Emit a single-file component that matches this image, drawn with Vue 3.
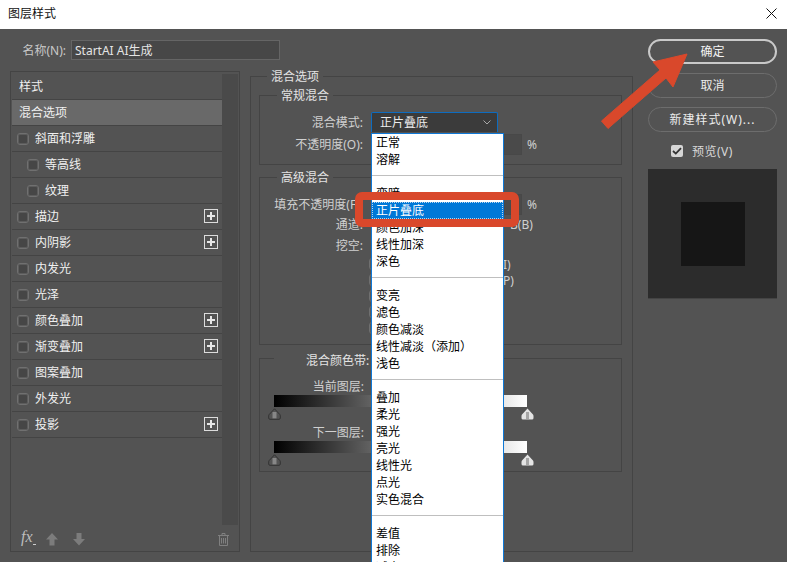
<template>
  <div class="dialog">
    <div class="titlebar">
      <span>图层样式</span>
      <svg class="close" width="11" height="11" viewBox="0 0 11 11">
        <path d="M0.5 0.5L10.5 10.5M10.5 0.5L0.5 10.5" stroke="#111" stroke-width="1" fill="none" />
      </svg>
    </div>

    <div class="content">
      <!-- левая колонка -->
      <div class="left">
        <div class="name-row">
          <span class="name-label">名称(N):</span>
          <div class="name-input">StartAI AI生成</div>
        </div>
        <div class="panel">
          <div class="list">
            <div
              v-for="row in styles"
              :key="row.text"
              class="style-row"
              :class="{ active: row.active, sub: row.sub, plain: row.plain }"
            >
              <span v-if="!row.plain" class="check"></span>
              <span class="style-text">{{ row.text }}</span>
              <span v-if="row.plus" class="plus"></span>
            </div>
            <div class="tools">
              <span class="fx">fx</span>
              <svg class="tool-up" width="12" height="13" viewBox="0 0 12 13">
                <path d="M6 0L12 6.500H8.500V12.500H3.500V6.500H0Z" fill="#7c7c7c" />
              </svg>
              <svg class="tool-down" width="12" height="13" viewBox="0 0 12 13">
                <path d="M6 12.500L12 6H8.500V0H3.500V6H0Z" fill="#7c7c7c" />
              </svg>
              <svg class="tool-trash" width="11" height="13" viewBox="0 0 11 13">
                <path d="M0 2.500H11M4 2.500V0.500H7V2.500M1.500 2.500V12.500H9.500V2.500M3.500 5V10.500M5.500 5V10.500M7.500 5V10.500" stroke="#808080" fill="none" />
              </svg>
            </div>
          </div>
          <div class="scroll"></div>
        </div>
      </div>

      <!-- средняя колонка -->
      <fieldset class="main-set">
        <legend>混合选项</legend>

        <fieldset class="group general">
          <legend>常规混合</legend>
          <div class="form-row select-row">
            <span class="label">混合模式:</span>
            <div class="select">
              <span>正片叠底</span>
              <svg width="8" height="5" viewBox="0 0 8 5">
                <path d="M0.500 0.500L4 4L7.500 0.500" stroke="#a8a8a8" fill="none" />
              </svg>
              <div class="popup">
                <template v-for="(item, i) in modes" :key="i">
                  <div v-if="item === '-'" class="sep"></div>
                  <div v-else class="mode" :class="{ current: item === '正片叠底' }">{{ item }}</div>
                </template>
              </div>
            </div>
          </div>
          <div class="form-row input-row">
            <span class="label">不透明度(O):</span>
            <div class="num"></div>
            <span class="pct">%</span>
          </div>
        </fieldset>

        <fieldset class="group advanced">
          <legend>高级混合</legend>
          <div class="form-row input-row fill-row">
            <span class="label">填充不透明度(F):</span>
            <div class="num"></div>
            <span class="pct">%</span>
          </div>
          <div class="form-row channel-row">
            <span class="label">通道:</span>
            <span class="channel-b">B(B)</span>
          </div>
          <div class="form-row knock-row">
            <span class="label">挖空:</span>
          </div>
          <div class="checks">
            <div v-for="(c, i) in advChecks" :key="i" class="adv-check">
              <span class="check"></span>
              <span v-if="c" class="adv-tail">{{ c }}</span>
            </div>
          </div>
        </fieldset>

        <fieldset class="group bands">
          <legend>混合颜色带:</legend>
          <div v-for="b in bandLabels" :key="b" class="band">
            <div class="band-label">{{ b }}</div>
            <div class="gradient"></div>
            <div class="sliders">
              <svg width="13" height="12" viewBox="0 0 13 12">
                <path d="M4.500 4H8.500V10.500H4.500Z" fill="#878787" />
                <path d="M6.500 0.800L1.200 6.500Q0.700 7 0.700 8V10Q0.700 11.300 2 11.300H11Q12.300 11.300 12.300 10V8Q12.300 7 11.800 6.500Z" fill="none" stroke="#333" />
              </svg>
              <svg width="13" height="12" viewBox="0 0 13 12">
                <path d="M6.500 0.500L1 6.500Q0.500 7 0.500 8V10Q0.500 11.500 2 11.500H11Q12.500 11.500 12.500 10V8Q12.500 7 12 6.500Z" fill="#e4e4e4" />
                <path d="M5 4H8V11H5Z" fill="#a6a6a6" />
              </svg>
            </div>
          </div>
        </fieldset>
      </fieldset>

      <!-- правая колонка -->
      <div class="right">
        <button class="btn primary">确定</button>
        <button class="btn">取消</button>
        <button class="btn wide">新建样式(W)...</button>
        <div class="preview-row">
          <span class="preview-check">
            <svg width="10" height="8" viewBox="0 0 10 8">
              <path d="M1 4L3.800 6.600L9 1.200" stroke="#333" stroke-width="1.800" fill="none" />
            </svg>
          </span>
          <span class="preview-text">预览(V)</span>
        </div>
        <div class="preview">
          <div class="preview-inner"></div>
        </div>
      </div>
    </div>

    <!-- красные пометки поверх скриншота -->
    <svg class="marks" width="787" height="562" viewBox="0 0 787 562">
      <rect x="359" y="196" width="156" height="27" rx="3" fill="none" stroke="#d9482b" stroke-width="8" />
      <path d="M608 128.500L601.500 121L660 70L653 62L687 54L673 87L666 78Z" fill="#d9482b" stroke="#d9482b" stroke-linejoin="round" />
    </svg>
  </div>
</template>

<script setup>
const styles = [
  { text: '样式', plain: true },
  { text: '混合选项', plain: true, active: true },
  { text: '斜面和浮雕' },
  { text: '等高线', sub: true },
  { text: '纹理', sub: true },
  { text: '描边', plus: true },
  { text: '内阴影', plus: true },
  { text: '内发光' },
  { text: '光泽' },
  { text: '颜色叠加', plus: true },
  { text: '渐变叠加', plus: true },
  { text: '图案叠加' },
  { text: '外发光' },
  { text: '投影', plus: true }
]

const modes = [
  '正常', '溶解', '-',
  '变暗', '正片叠底', '颜色加深', '线性加深', '深色', '-',
  '变亮', '滤色', '颜色减淡', '线性减淡（添加）', '浅色', '-',
  '叠加', '柔光', '强光', '亮光', '线性光', '点光', '实色混合', '-',
  '差值', '排除', '减去'
]

// подписи закрыты выпадающим списком, видны только хвосты
const advChecks = ['I)', 'P)', '', '', '']

const bandLabels = ['当前图层:', '下一图层:']
</script>

<style>
html,
body {
  margin: 0;
  background: #535353;
}
</style>

<style scoped>
.dialog {
  position: relative;
  width: 787px;
  height: 562px;
  overflow: hidden;
  background: #535353;
  color: #dcdcdc;
  font-family: "Noto Sans", "Noto Sans CJK SC", sans-serif;
  font-size: 12px;
  line-height: 16px;
}

.titlebar {
  height: 29px;
  background: #fff;
  color: #111;
  display: flex;
  align-items: center;
  justify-content: space-between;
  padding: 0 10px 2px 8px;
  box-sizing: border-box;
}

.content {
  display: flex;
  align-items: flex-start;
}

/* левая колонка */
.left {
  width: 230px;
  margin-left: 10px;
  flex-shrink: 0;
}

.name-row {
  display: flex;
  align-items: center;
  margin-top: 11px;
  height: 20px;
}

.name-label {
  width: 56px;
  flex-shrink: 0;
  margin-right: 5px;
  padding-top: 1px;
  text-align: right;
  white-space: nowrap;
  color: #c8c8c8;
}

.name-input {
  width: 209px;
  height: 20px;
  box-sizing: border-box;
  flex-shrink: 0;
  padding: 1px 0 0 3px;
  line-height: 18px;
  background: #474747;
  border: 1px solid #656565;
  color: #e4e4e4;
}

.panel {
  margin-top: 11px;
  height: 481px;
  box-sizing: border-box;
  border: 1px solid #444;
  padding-top: 2px;
  padding-left: 1px;
  display: flex;
}

.list {
  width: 210px;
  display: flex;
  flex-direction: column;
}

.style-row {
  position: relative;
  height: 26px;
  box-sizing: border-box;
  border-bottom: 1px solid #444;
  display: flex;
  align-items: center;
  padding-left: 5px;
  color: #f0f0f0;
}

.style-row:last-of-type {
  border-bottom-color: #4c4c4c;
}

.style-row.plain {
  padding-left: 7px;
}

.style-row.sub {
  padding-left: 15px;
}

.style-row.active {
  background: #696969;
}

.check {
  width: 12px;
  height: 12px;
  box-sizing: border-box;
  flex-shrink: 0;
  border: 1px solid #707070;
  border-radius: 3px;
  background: #464646;
  box-shadow: inset 0 0 0 1px #5c5c5c;
}

.style-text {
  margin-left: 6px;
}

.plain .style-text {
  margin-left: 0;
}

.plus {
  position: absolute;
  right: 4px;
  top: 5px;
  width: 14px;
  height: 14px;
  box-sizing: border-box;
  border: 1px solid #dcdcdc;
  background:
    linear-gradient(#e6e6e6, #e6e6e6) center / 8px 2px no-repeat,
    linear-gradient(#e6e6e6, #e6e6e6) center / 2px 8px no-repeat;
}

.tools {
  position: relative;
  height: 113px;
}

.fx {
  position: absolute;
  left: 9px;
  top: 91px;
  font-family: "Liberation Serif", serif;
  font-style: italic;
  font-size: 16px;
  color: #bdbdbd;
}

.fx::after {
  content: "";
  position: absolute;
  left: 12px;
  top: 15px;
  width: 3px;
  height: 1px;
  background: #ccc;
}

.tool-up,
.tool-down,
.tool-trash {
  position: absolute;
  top: 95px;
}

.tool-up {
  left: 34px;
}

.tool-down {
  left: 61px;
}

.tool-trash {
  left: 206px;
}

.scroll {
  width: 16px;
  height: 451px;
  background: #4a4a4a;
}

/* средняя колонка */
fieldset {
  margin: 0;
  padding: 0;
  min-width: 0;
  box-sizing: border-box;
  border: 1px solid #444;
}

legend {
  height: 16px;
  box-sizing: border-box;
  padding: 0 4px;
  line-height: 18px;
  color: #e4e4e4;
}

.main-set {
  width: 383px;
  height: 484px;
  margin: 39px 0 0 10px;
  flex-shrink: 0;
  padding: 0 10px 0 8px;
}

.main-set > legend {
  margin-left: 8px;
}

.group legend {
  margin-left: 17px;
}

.general {
  height: 78px;
  margin-top: 3px;
}

.advanced {
  height: 176px;
  margin-top: 4px;
}

.bands {
  height: 124px;
  margin-top: 3px;
  padding: 0 14px;
}

.bands legend {
  height: 20px;
  margin-left: 0;
  padding: 6px 4px 0 32px;
  line-height: 14px;
}

.form-row {
  display: flex;
  align-items: center;
}

.label {
  width: 103px;
  flex-shrink: 0;
  padding-top: 1px;
  text-align: right;
  white-space: nowrap;
  color: #d0d0d0;
}

.select-row {
  margin-top: 9px;
  height: 20px;
}

.select {
  position: relative;
  width: 127px;
  height: 20px;
  box-sizing: border-box;
  margin-left: 8px;
  background: #3b3b3b;
  border: 1px solid #0d6cc0;
  border-bottom: none;
  border-radius: 2px 2px 0 0;
  display: flex;
  align-items: center;
  justify-content: space-between;
  padding: 0 6px 0 8px;
  color: #ececec;
}

.popup {
  position: absolute;
  left: -1px;
  top: 20px;
  width: 133px;
  box-sizing: border-box;
  background: #fff;
  border: 1px solid #0f78d6;
  border-bottom: none;
  color: #000;
  z-index: 3;
}

.mode {
  height: 17px;
  line-height: 17px;
  padding-left: 4px;
  white-space: nowrap;
}

.mode.current {
  background: #0078d7;
  color: #fff;
  outline: 1px dotted #b9d6ee;
  outline-offset: -1px;
}

.sep {
  height: 17px;
  box-sizing: border-box;
  padding-top: 7px;
}

.sep::before {
  content: "";
  display: block;
  height: 1px;
  background: #bfbfbf;
}

.input-row {
  height: 21px;
  margin-top: 2px;
}

.fill-row {
  margin-top: 9px;
}

.num {
  width: 18px;
  height: 21px;
  box-sizing: border-box;
  margin-left: 141px;
  border: 1px solid #484848;
  background: #4a4a4a;
}

.pct {
  margin-left: 5px;
  padding-top: 1px;
  color: #d0d0d0;
}

.channel-row {
  height: 16px;
  margin-top: 1px;
}

.channel-b {
  margin-left: 147px;
  padding-top: 1px;
  color: #d0d0d0;
}

.knock-row {
  height: 16px;
  margin-top: 5px;
}

.checks {
  margin-top: 3px;
  padding-left: 109px;
}

.adv-check {
  height: 16px;
  display: flex;
  align-items: center;
  white-space: nowrap;
  color: #d0d0d0;
}

.adv-tail {
  margin-left: 122px;
  padding-top: 1px;
}

.band {
  margin-top: 11px;
}

.band + .band {
  margin-top: 5px;
}

.band-label {
  width: 90px;
  height: 14px;
  line-height: 15px;
  text-align: right;
  color: #d0d0d0;
}

.gradient {
  width: 253px;
  height: 12px;
  margin: 2px 0 1px 0;
  background: linear-gradient(to right, #000, #fff);
}

.sliders {
  width: 266px;
  height: 12px;
  margin-left: -6px;
  display: flex;
  justify-content: space-between;
}

/* правая колонка */
.right {
  width: 129px;
  margin: 10px 0 0 15px;
  flex-shrink: 0;
  display: flex;
  flex-direction: column;
  gap: 9px;
}

.btn {
  height: 25px;
  padding: 1px 0 0;
  border: 1px solid #6d6d6d;
  border-radius: 13px;
  background: #535353;
  color: #ececec;
  font: inherit;
}

.btn.primary {
  border: 2px solid #c9c9c9;
  color: #f4f4f4;
}

.btn.wide {
  letter-spacing: 1px;
}

.preview-row {
  display: flex;
  align-items: center;
  height: 16px;
  margin-top: 2px;
  padding-left: 23px;
  color: #d8d8d8;
}

.preview-text {
  padding-top: 1px;
  letter-spacing: 0.5px;
}

.preview-check {
  width: 12px;
  height: 12px;
  border-radius: 2px;
  background: #d6d6d6;
  display: flex;
  align-items: center;
  justify-content: center;
  margin-right: 9px;
}

.preview {
  height: 130px;
  margin-top: 1px;
  background: #2c2c2c;
  border-bottom: 1px solid #444;
  box-sizing: border-box;
  display: flex;
  align-items: center;
  justify-content: center;
}

.preview-inner {
  width: 64px;
  height: 64px;
  background: #161616;
}

.marks {
  position: absolute;
  left: 0;
  top: 0;
  z-index: 5;
  pointer-events: none;
}
</style>
